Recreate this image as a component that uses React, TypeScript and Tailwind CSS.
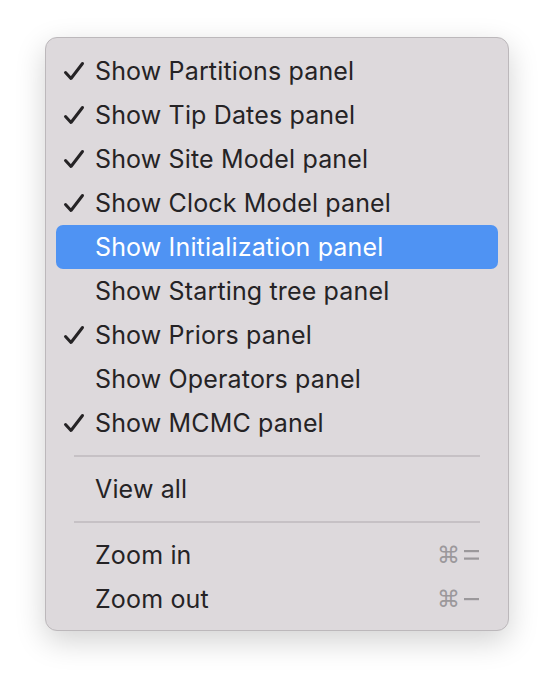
import React from 'react';

type Item =
  | { kind: 'item'; label: string; checked?: boolean; active?: boolean; shortcut?: 'eq' | 'minus' }
  | { kind: 'sep' };

const items: Item[] = [
  { kind: 'item', label: 'Show Partitions panel', checked: true },
  { kind: 'item', label: 'Show Tip Dates panel', checked: true },
  { kind: 'item', label: 'Show Site Model panel', checked: true },
  { kind: 'item', label: 'Show Clock Model panel', checked: true },
  { kind: 'item', label: 'Show Initialization panel', active: true },
  { kind: 'item', label: 'Show Starting tree panel' },
  { kind: 'item', label: 'Show Priors panel', checked: true },
  { kind: 'item', label: 'Show Operators panel' },
  { kind: 'item', label: 'Show MCMC panel', checked: true },
  { kind: 'sep' },
  { kind: 'item', label: 'View all' },
  { kind: 'sep' },
  { kind: 'item', label: 'Zoom in', shortcut: 'eq' },
  { kind: 'item', label: 'Zoom out', shortcut: 'minus' },
];

const Check = () => (
  <svg width="22" height="20" viewBox="0 0 22 20" fill="none">
    <path d="M2.5 11.5 L8 17.5 L19.5 2.5" stroke="currentColor" strokeWidth="3" strokeLinecap="round" strokeLinejoin="round" />
  </svg>
);

// shortcut key: command glyph plus = or −
const Shortcut = ({ k }: { k: 'eq' | 'minus' }) => (
  <span className="flex items-center gap-[4px] text-[#9b989b]">
    <span className="text-[23px] leading-none" style={{ fontFamily: '"DejaVu Sans", sans-serif' }}>⌘</span>
    <svg width="16" height="14" viewBox="0 0 16 14">
      {k === 'eq' ? (
        <>
          <rect x="0" y="2" width="15" height="2.2" fill="currentColor" />
          <rect x="0" y="9.5" width="15" height="2.2" fill="currentColor" />
        </>
      ) : (
        <rect x="0" y="6" width="15" height="2.2" fill="currentColor" />
      )}
    </svg>
  </span>
);

export default function App() {
  return (
    <div className="min-h-screen bg-white pl-[45px] pt-[37px]" style={{ fontFamily: 'Inter, "Noto Sans", sans-serif' }}>
      <div className="w-[464px] rounded-[12px] border border-[#bcb8bb] bg-[#ddd9dc] px-[10px] pb-[9px] pt-[11px] shadow-[0_10px_30px_rgba(0,0,0,0.18)]">
        {items.map((it, i) =>
          it.kind === 'sep' ? (
            <div key={i} className="flex h-[22px] items-center px-[18px]">
              <div className="h-[2px] w-full bg-[#c6c1c5]" />
            </div>
          ) : (
            <div
              key={i}
              className={`flex h-[44px] items-center rounded-[7px] pr-[18px] text-[25px] ${
                it.active ? 'bg-[#4f93f3] text-white' : 'text-[#252325]'
              }`}
            >
              <span className="flex w-[39px] justify-start pl-[7px]">{it.checked ? <Check /> : null}</span>
              <span className="flex-1 pt-[2px] tracking-[0.15px]">{it.label}</span>
              {it.shortcut ? <Shortcut k={it.shortcut} /> : null}
            </div>
          )
        )}
      </div>
    </div>
  );
}
